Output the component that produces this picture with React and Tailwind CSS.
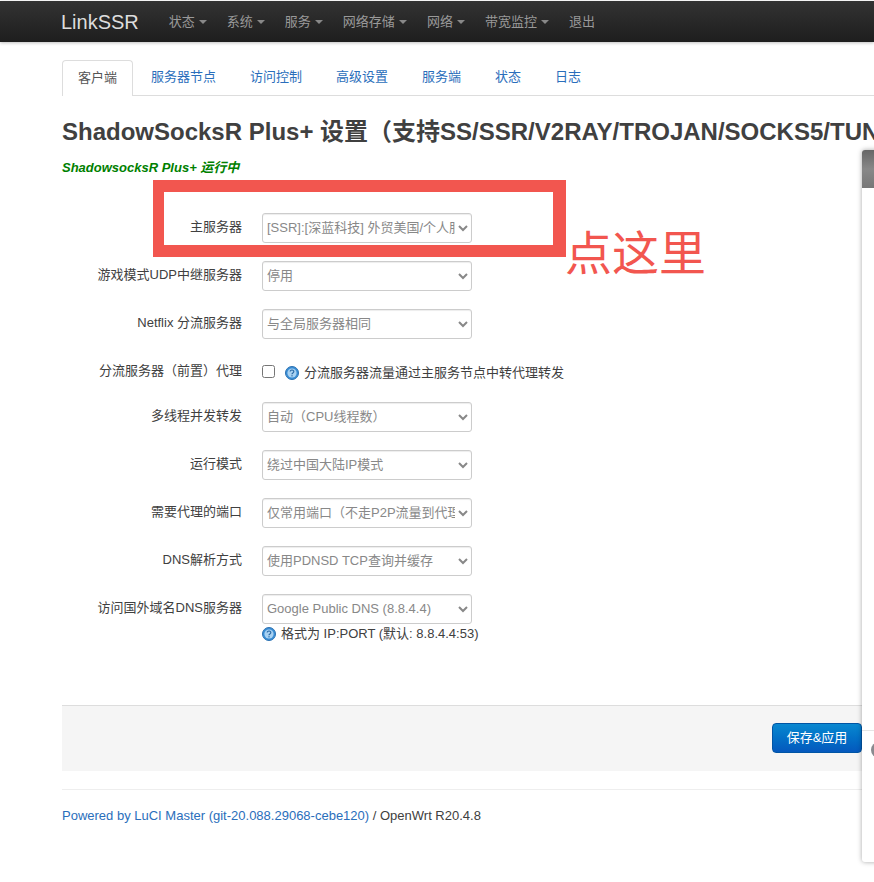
import React from 'react';

const fontStack = { fontFamily: '"Liberation Sans", "Noto Sans CJK SC", sans-serif' };

const navItems = [
  { name: '状态', caret: true },
  { name: '系统', caret: true },
  { name: '服务', caret: true },
  { name: '网络存储', caret: true },
  { name: '网络', caret: true },
  { name: '带宽监控', caret: true },
  { name: '退出', caret: false },
];

const tabs = ['服务器节点', '访问控制', '高级设置', '服务端', '状态', '日志'];

const selectRows = [
  { label: '主服务器', value: '[SSR]:[深蓝科技] 外贸美国/个人服务器节点' },
  { label: '游戏模式UDP中继服务器', value: '停用' },
  { label: 'Netflix 分流服务器', value: '与全局服务器相同' },
];

const lowerRows = [
  { label: '多线程并发转发', value: '自动（CPU线程数）' },
  { label: '运行模式', value: '绕过中国大陆IP模式' },
  { label: '需要代理的端口', value: '仅常用端口（不走P2P流量到代理服务器）' },
  { label: 'DNS解析方式', value: '使用PDNSD TCP查询并缓存' },
];

const HelpIcon = () => (
  <svg width="14" height="14" viewBox="0 0 14 14" className="shrink-0">
    <circle cx="7" cy="7" r="6.5" fill="#3b8fd6" stroke="#2a70b0" />
    <circle cx="7" cy="7" r="4.6" fill="#a9d2f2" />
    <path d="M5.2 5.6a1.8 1.6 0 1 1 2.7 1.4c-.6.4-.9.6-.9 1.3" fill="none" stroke="#2a6aa6" strokeWidth="1.2" />
    <rect x="6.4" y="9.2" width="1.2" height="1.2" fill="#2a6aa6" />
  </svg>
);

const SelectBox = ({ value }) => (
  <select
    defaultValue={value}
    className="w-[210px] h-[30px] pb-[2px] text-[13px] text-[#888] bg-white border border-[#ccc] rounded-[3px] shadow-[inset_0_1px_1px_rgba(0,0,0,0.075)]"
    style={fontStack}
  >
    <option>{value}</option>
  </select>
);

const Row = ({ label, children, className = 'h-[48px]' }) => (
  <div className={`flex items-start ${className}`}>
    <label className="w-[180px] pt-[5px] text-right text-[13px] leading-[18px] text-[#404040] whitespace-nowrap">
      {label}
    </label>
    <div className="ml-[20px]">{children}</div>
  </div>
);

export default function App() {
  return (
    <div className="relative w-[874px] h-[882px] overflow-hidden bg-white" style={fontStack}>
      {/* Top bar */}
      <div className="mt-px h-[41px] flex items-center pl-[61px] bg-gradient-to-b from-[#333] to-[#1e1e1e] shadow-[0_1px_3px_rgba(0,0,0,0.25)]">
        <span className="mr-[20px] text-[20px] text-[#ddd]">LinkSSR</span>
        {navItems.map((item) => (
          <span key={item.name} className="flex items-center px-[10px] text-[13px] text-[#999]">
            {item.name}
            {item.caret && (
              <span className="ml-[4px] w-0 h-0 border-x-4 border-x-transparent border-t-4 border-t-[#888]" />
            )}
          </span>
        ))}
      </div>

      <div className="pl-[62px]">
        {/* Tabs */}
        <div className="mt-[18px] flex h-[36px] border-b border-[#ddd]">
          <div className="h-[36px] px-[15px] pt-[8px] text-[13px] leading-[18px] text-[#555] bg-white border border-b-0 border-[#ddd] rounded-t-[4px] mr-[2px]">
            客户端
          </div>
          {tabs.map((tab) => (
            <div key={tab} className="px-4 mr-[2px] pt-[8px] text-[13px] leading-[18px] text-[#2a6ebb]">
              {tab}
            </div>
          ))}
        </div>

        <h2 className="mt-[20px] text-[24px] leading-[32px] font-bold text-[#404040] whitespace-nowrap">
          ShadowSocksR Plus+ 设置（支持SS/SSR/V2RAY/TROJAN/SOCKS5/TUN
        </h2>

        <div className="mt-[11px] text-[13px] leading-[18px] font-bold italic text-[#008000]">
          ShadowsocksR Plus+ 运行中
        </div>

        {/* Form */}
        <div className="mt-[36px]">
          {selectRows.map((row) => (
            <Row key={row.label} label={row.label}>
              <SelectBox value={row.value} />
            </Row>
          ))}
          <Row label="分流服务器（前置）代理" className="h-[45px]">
            <div className="flex items-center h-[30px] pt-[2px]">
              <input type="checkbox" className="w-[13px] h-[13px] -mt-[3px]" />
              <span className="ml-[10px] flex items-center text-[13px] text-[#404040] whitespace-nowrap">
                <HelpIcon />
                <span className="ml-[5px]">分流服务器流量通过主服务节点中转代理转发</span>
              </span>
            </div>
          </Row>
          {lowerRows.map((row) => (
            <Row key={row.label} label={row.label}>
              <SelectBox value={row.value} />
            </Row>
          ))}
          <Row label="访问国外域名DNS服务器" className="h-[60px]">
            <SelectBox value="Google Public DNS (8.8.4.4)" />
            <div className="mt-px flex items-center text-[13px] leading-[18px] text-[#404040] whitespace-nowrap">
              <HelpIcon />
              <span className="ml-[5px]">格式为 IP:PORT (默认: 8.8.4.4:53)</span>
            </div>
          </Row>
        </div>

        {/* Actions */}
        <div className="mt-[51px] h-[66px] flex items-start justify-end pt-[17px] pr-[12px] bg-[#f5f5f5] border-t border-[#ddd]">
          <button className="w-[90px] h-[30px] text-[13px] text-white rounded-[4px] border border-[#0055a5] bg-gradient-to-b from-[#0a88d0] to-[#0558bd]">
            保存&amp;应用
          </button>
        </div>

        <div className="mt-[18px] pt-[17px] border-t border-[#eee] text-[13px] leading-[18px] text-[#404040] whitespace-nowrap">
          <span className="text-[#2a6ebb]">Powered by LuCI Master (git-20.088.29068-cebe120)</span> / OpenWrt R20.4.8
        </div>
      </div>

      {/* Screenshot annotation */}
      <div className="absolute left-[153px] top-[180px] w-[413px] h-[77px] border-[#f2564f] border-t-[12px] border-b-[12px] border-l-[11px] border-r-[13px]" />
      <div
        className="absolute left-[565px] top-[220px] text-[47px] leading-[60px] font-normal text-[#f2564f] whitespace-nowrap"
        style={{ fontFamily: '"Noto Sans CJK SC", sans-serif' }}
      >
        点这里
      </div>

      {/* Overlapping side panel */}
      <div className="absolute left-[862px] top-[150px] w-[20px] h-[712px] bg-white rounded-[3px] shadow-[0_0_5px_rgba(0,0,0,0.35)] overflow-hidden">
        <div className="h-[38px] bg-gradient-to-b from-[#666] via-[#888] to-[#777]" />
        <div className="mt-[542px] h-px bg-[#e5e5e5]" />
        <div className="mt-[11px] ml-[9px] w-[16px] h-[16px] rounded-full bg-[#8a8a8f]" />
      </div>
    </div>
  );
}
